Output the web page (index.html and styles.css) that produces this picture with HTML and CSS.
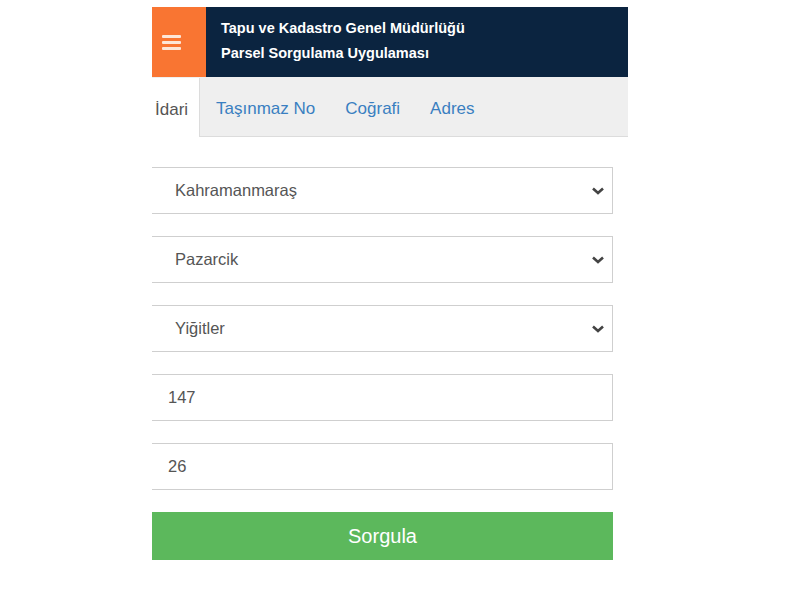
FILE: index.html
```html
<!DOCTYPE html>
<html lang="tr">
<head>
    <meta charset="UTF-8">
    <meta name="viewport" content="width=device-width, initial-scale=1.0">
    <title>Parsel Sorgulama Uygulaması</title>
    <link rel="stylesheet" href="styles.css">
</head>
<body>
    <div class="app">
        <!-- Header -->
        <div class="header">
            <div class="menu-btn">
                <span class="bars"></span>
            </div>
            <div class="title">
                Tapu ve Kadastro Genel Müdürlüğü<br>
                Parsel Sorgulama Uygulaması
            </div>
        </div>

        <!-- Tabs -->
        <ul class="tabs">
            <li class="tab active">İdari</li>
            <li class="tab">Taşınmaz No</li>
            <li class="tab">Coğrafi</li>
            <li class="tab">Adres</li>
        </ul>

        <!-- Form -->
        <div class="form">
            <div class="field select">
                <span>Kahramanmaraş</span>
                <svg class="chevron" width="14" height="10" viewBox="0 0 14 10"><path d="M2 2.5 L7 7 L12 2.5" fill="none" stroke="#444" stroke-width="2.6"/></svg>
            </div>
            <div class="field select">
                <span>Pazarcik</span>
                <svg class="chevron" width="14" height="10" viewBox="0 0 14 10"><path d="M2 2.5 L7 7 L12 2.5" fill="none" stroke="#444" stroke-width="2.6"/></svg>
            </div>
            <div class="field select">
                <span>Yiğitler</span>
                <svg class="chevron" width="14" height="10" viewBox="0 0 14 10"><path d="M2 2.5 L7 7 L12 2.5" fill="none" stroke="#444" stroke-width="2.6"/></svg>
            </div>
            <div class="field input">147</div>
            <div class="field input">26</div>
            <button class="submit">Sorgula</button>
        </div>
    </div>
</body>
</html>
```

FILE: styles.css
```css
body {
    margin: 0;
    background: #fff;
    font-family: "Liberation Sans", Arial, sans-serif;
}
.app {
    width: 476px;
    margin: 7px 0 0 152px;
}
.header {
    display: flex;
    height: 70px;
    background-color: #0b2440;
    color: #fff;
}
.menu-btn {
    width: 54px;
    background-color: #f97532;
    display: flex;
    align-items: center;
    padding-left: 10px;
    box-sizing: border-box;
}
.bars {
    display: block;
    width: 19px;
    height: 3px;
    background: #fde6d8;
    box-shadow: 0 -6px 0 #fde6d8, 0 6px 0 #fde6d8;
    border-radius: 1px;
}
.title {
    padding: 9px 0 0 15px;
    font-size: 14.5px;
    font-weight: bold;
    line-height: 25px;
}
.tabs {
    display: flex;
    list-style: none;
    margin: 0;
    padding: 0;
    height: 59px;
    background-color: #efefef;
    border-bottom: 1px solid #dcdcdc;
}
.tab {
    padding: 4px 14px 0;
    margin-right: 2px;
    font-size: 17px;
    color: #3a7fc1;
    display: flex;
    align-items: center;
}
.tab.active {
    background: #fff;
    color: #555;
    padding: 5px 11px 0 3px;
    border-right: 1px solid #dcdcdc;
    margin: 1px 2px -1px 0;
    height: 59px;
    box-sizing: border-box;
}
.form {
    display: flex;
    flex-direction: column;
    gap: 22px;
    padding: 30px 15px 0 0;
}
.field {
    height: 47px;
    box-sizing: border-box;
    border: 1px solid #cfcfcf;
    border-left: none;
    display: flex;
    align-items: center;
    font-size: 16.5px;
    color: #555;
}
.select {
    justify-content: space-between;
    padding: 0 7px 0 23px;
}
.input {
    padding-left: 16px;
}
.submit {
    height: 48px;
    border: none;
    background-color: #5cb85c;
    color: #fff;
    font-family: "Liberation Sans", Arial, sans-serif;
    font-size: 20px;
}
```
